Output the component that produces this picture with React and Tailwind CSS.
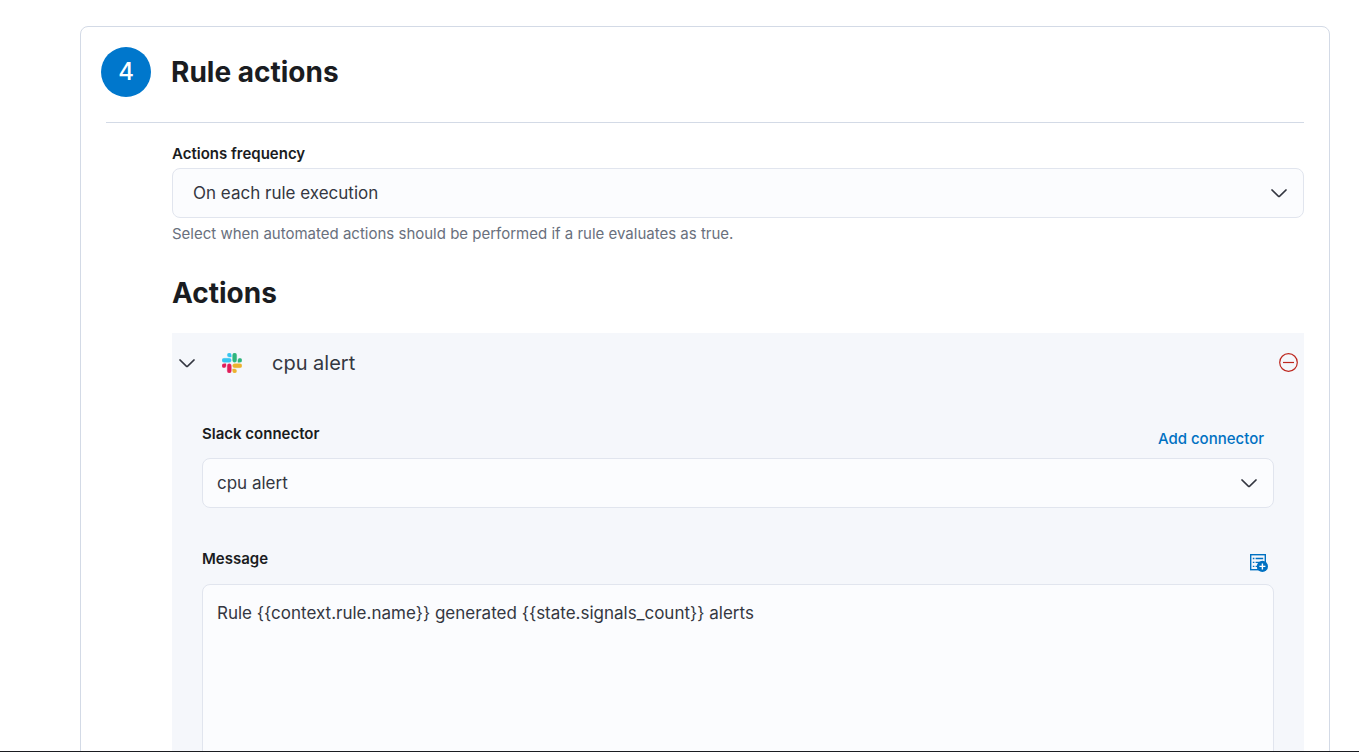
import React from "react";

function ChevronDown() {
  return (
    <svg
      className="pointer-events-none h-5 w-5 shrink-0 text-[#343741]"
      viewBox="0 0 20 20"
      fill="none"
      stroke="currentColor"
      strokeWidth="1.5"
      strokeLinecap="round"
      strokeLinejoin="round"
      aria-hidden="true"
    >
      <path d="M2.9 6.9l6.4 6.2a1 1 0 0 0 1.4 0l6.4-6.2" />
    </svg>
  );
}

function SlackLogo() {
  return (
    <svg className="h-5 w-5 shrink-0" viewBox="0 0 54 54" aria-hidden="true">
      <path
        fill="#36C5F0"
        stroke="#36C5F0"
        d="M19.712.133a5.381 5.381 0 0 0-5.376 5.387 5.381 5.381 0 0 0 5.376 5.386h5.376V5.52A5.381 5.381 0 0 0 19.712.133m0 14.365H5.376A5.381 5.381 0 0 0 0 19.884a5.381 5.381 0 0 0 5.376 5.387h14.336a5.381 5.381 0 0 0 5.376-5.387 5.381 5.381 0 0 0-5.376-5.386"
      />
      <path
        fill="#2EB67D"
        stroke="#2EB67D"
        d="M53.76 19.884a5.381 5.381 0 0 0-5.376-5.386 5.381 5.381 0 0 0-5.376 5.386v5.387h5.376a5.381 5.381 0 0 0 5.376-5.387m-14.336 0V5.52A5.381 5.381 0 0 0 34.048.133a5.381 5.381 0 0 0-5.376 5.387v14.364a5.381 5.381 0 0 0 5.376 5.387 5.381 5.381 0 0 0 5.376-5.387"
      />
      <path
        fill="#ECB22E"
        stroke="#ECB22E"
        d="M34.048 54a5.381 5.381 0 0 0 5.376-5.387 5.381 5.381 0 0 0-5.376-5.386h-5.376v5.386A5.381 5.381 0 0 0 34.048 54m0-14.365h14.336a5.381 5.381 0 0 0 5.376-5.386 5.381 5.381 0 0 0-5.376-5.387H34.048a5.381 5.381 0 0 0-5.376 5.387 5.381 5.381 0 0 0 5.376 5.386"
      />
      <path
        fill="#E01E5A"
        stroke="#E01E5A"
        d="M0 34.249a5.381 5.381 0 0 0 5.376 5.386 5.381 5.381 0 0 0 5.376-5.386v-5.387H5.376A5.381 5.381 0 0 0 0 34.25m14.336-.001v14.364A5.381 5.381 0 0 0 19.712 54a5.381 5.381 0 0 0 5.376-5.387V34.25a5.381 5.381 0 0 0-5.376-5.387 5.381 5.381 0 0 0-5.376 5.387"
      />
    </svg>
  );
}

function MinusInCircle() {
  return (
    <svg className="h-5 w-5" viewBox="0 0 20 20" fill="none" stroke="currentColor" strokeWidth="1.2" aria-hidden="true">
      <circle cx="9.5" cy="9.5" r="8.8" />
      <path d="M4 9.5h11" />
    </svg>
  );
}

function InsertVariable() {
  return (
    <svg className="h-5 w-5" viewBox="0 0 20 20" fill="none" aria-hidden="true">
      <rect x="1.7" y="1.7" width="14.6" height="15" stroke="currentColor" strokeWidth="1.4" />
      <path
        stroke="currentColor"
        strokeWidth="1.3"
        d="M3.8 5.5h1.6M6.6 5.5h7.6M3.8 9.4h1.6M6.6 9.4h4.6M3.8 13.4h1.6M6.6 13.4h2"
      />
      <circle cx="13.4" cy="13.4" r="5.6" fill="currentColor" />
      <path stroke="#fff" strokeWidth="1.4" d="M10.4 13.4h6M13.4 10.4v6" />
    </svg>
  );
}

function SelectField({ id, value, inset, describedBy }) {
  return (
    <div className="grid items-center">
      <select
        id={id}
        aria-describedby={describedBy}
        defaultValue={value}
        className={`col-start-1 row-start-1 h-[50px] w-full appearance-none rounded-lg border border-[#e1e5ee] bg-[#fbfcfe] pr-12 text-[17px] leading-7 text-[#343741] ${inset}`}
      >
        <option>{value}</option>
      </select>
      <span className="pointer-events-none col-start-1 row-start-1 justify-self-end pr-[15px]">
        <ChevronDown />
      </span>
    </div>
  );
}

export default function App() {
  return (
    <main className="h-screen overflow-hidden border-b border-[#1a1c21] bg-white pt-[26px] pr-[29px] pl-20 font-['Inter',sans-serif] text-[#343741]">
      <section className="rounded-lg border border-[#d3dae6] px-5 pt-5 pb-10">
        <header className="flex items-center gap-5">
          <span className="flex h-[50px] w-[50px] items-center justify-center rounded-full bg-[#0077cc] text-2xl font-medium text-white">
            4
          </span>
          <h2 className="text-[28px] leading-9 font-bold text-[#1a1c21]">Rule actions</h2>
        </header>

        <hr className="mt-[25px] mr-[5px] ml-[5px] border-[#d3dae6]" />

        <div className="mr-[5px] ml-[71px] pt-[21px]">
          <label htmlFor="frequency" className="block pb-1 text-[15px] leading-5 font-semibold text-[#1a1c21]">
            Actions frequency
          </label>
          <SelectField id="frequency" value="On each rule execution" inset="pl-5" describedBy="frequency-help" />
          <p id="frequency-help" className="pt-[6px] text-[15px] leading-5 text-[#69707d]">
            Select when automated actions should be performed if a rule evaluates as true.
          </p>

          <h2 className="pt-[31px] text-[28px] leading-9 font-bold text-[#1a1c21]">Actions</h2>

          <div className="mt-[22px] bg-[#f5f7fb]">
            <div className="flex h-[60px] items-center px-[5px]">
              <button type="button" aria-expanded="true" className="flex items-center">
                <ChevronDown />
                <span className="pl-[25px]">
                  <SlackLogo />
                </span>
                <span className="pl-[30px] text-xl">cpu alert</span>
              </button>
              <button type="button" aria-label="Delete action" className="ml-auto text-[#bd271e]">
                <MinusInCircle />
              </button>
            </div>

            <div className="px-[30px] pt-[31px] pb-[30px]">
              <div className="flex justify-between pb-[14px]">
                <label htmlFor="connector" className="text-[15px] leading-5 font-semibold text-[#1a1c21]">
                  Slack connector
                </label>
                <button type="button" className="mt-[5px] mr-[10px] -mb-[5px] text-[15px] leading-5 font-medium text-[#0071c2]">
                  Add connector
                </button>
              </div>
              <SelectField id="connector" value="cpu alert" inset="pl-[14px]" />

              <div className="flex items-start justify-between pt-[41px] pb-[15px]">
                <label htmlFor="message" className="text-[15px] leading-5 font-semibold text-[#1a1c21]">
                  Message
                </label>
                <button type="button" aria-label="Add variable" className="mt-1 mr-[5px] -mb-1 text-[#0071c2]">
                  <InsertVariable />
                </button>
              </div>
              <textarea
                id="message"
                rows={8}
                defaultValue="Rule {{context.rule.name}} generated {{state.signals_count}} alerts"
                className="block w-full resize-none rounded-lg border border-[#e1e5ee] bg-[#fbfcfe] px-[14px] py-[14px] text-[17px] leading-7 text-[#343741]"
              />
            </div>
          </div>
        </div>
      </section>
    </main>
  );
}
